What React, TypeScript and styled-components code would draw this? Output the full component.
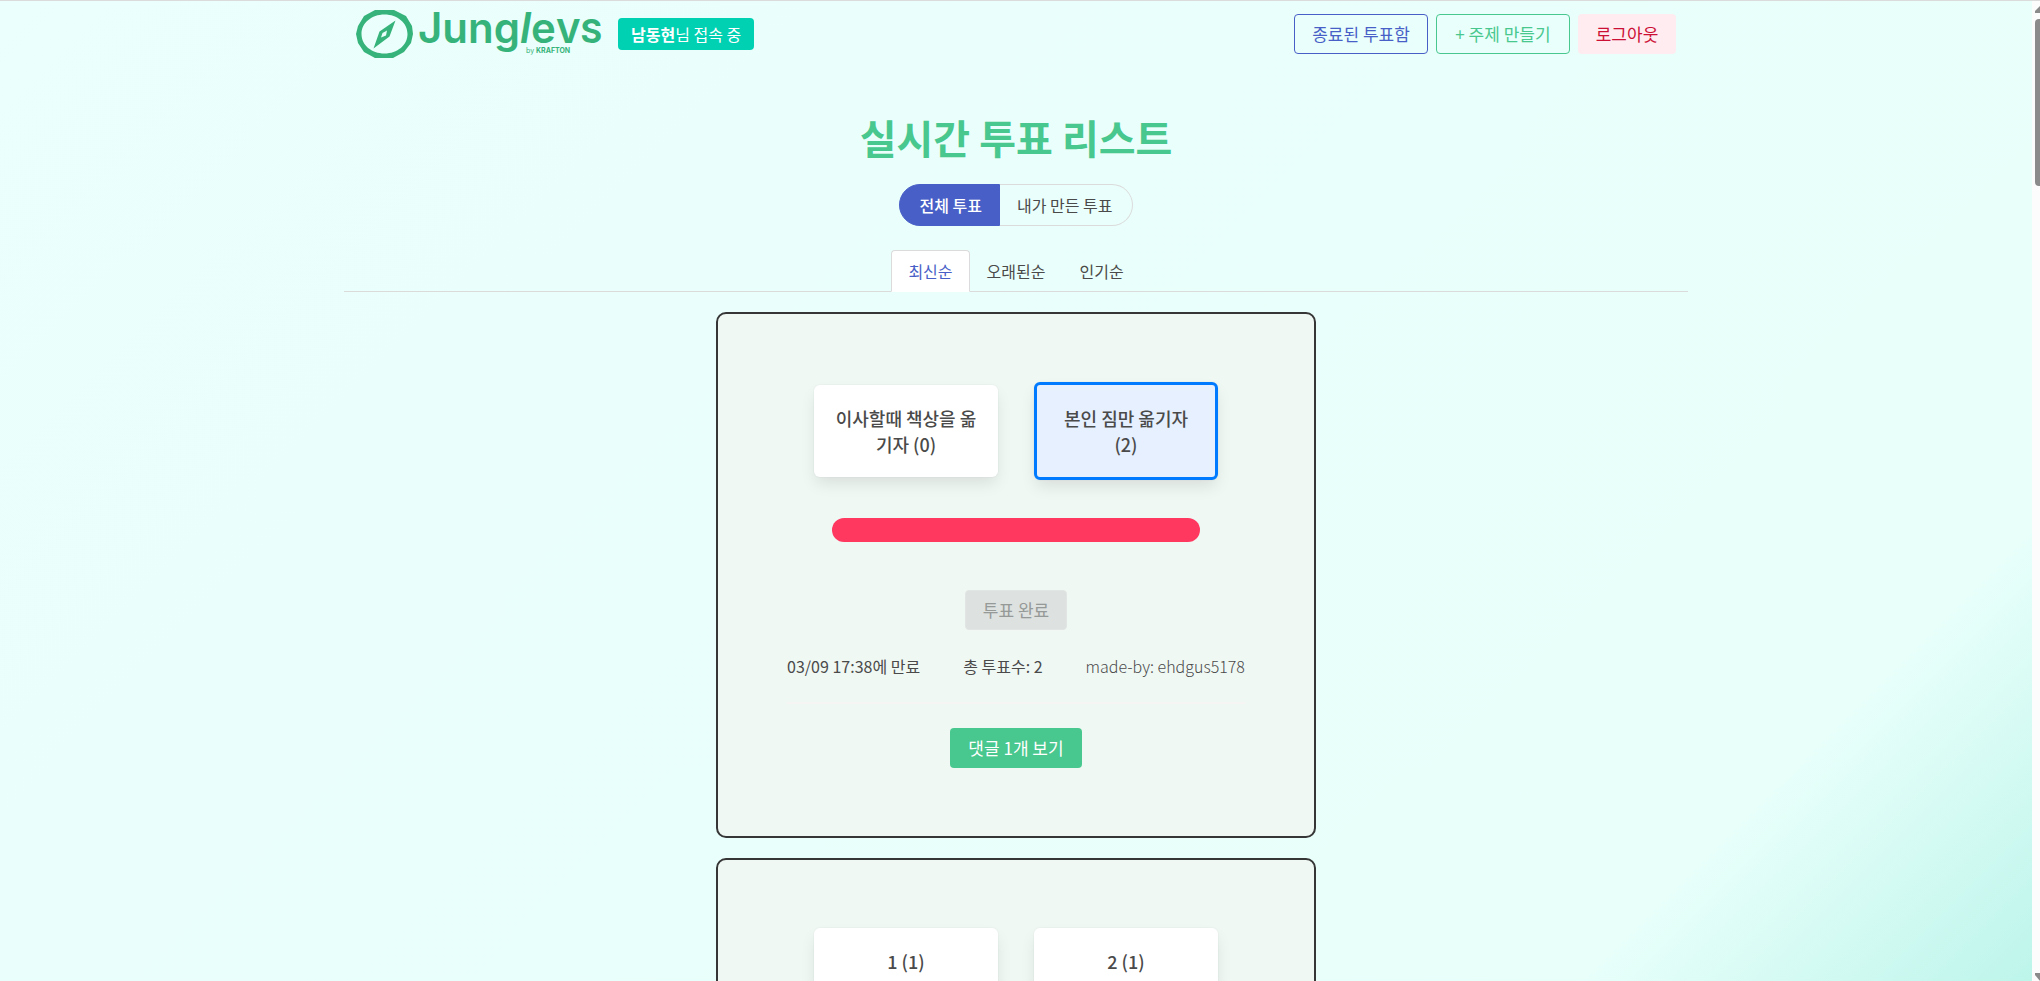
import React from "react";
import styled, { createGlobalStyle } from "styled-components";

const GlobalStyle = createGlobalStyle`
  *, *::before, *::after { box-sizing: border-box; }
  html, body, #root { height: 100%; }
  body {
    margin: 0;
    overflow: hidden;
    color: #4a4a4a;
    font-family: "Noto Sans CJK KR", "Noto Sans KR", sans-serif;
    font-size: 16px;
    line-height: 24px;
  }
  button { font-family: inherit; cursor: pointer; }
  h1, p, ul { margin: 0; padding: 0; }
`;

const Shell = styled.div`
  display: grid;
  grid-template-columns: minmax(0, 1fr) 8px;
  height: 100vh;
  border-top: 1px solid #dbdbdb;
`;

const Page = styled.div`
  overflow: hidden;
  background: linear-gradient(135deg, #ebfffc 0%, #e8fffa 85%, #bdf5eb 100%);
`;

const Container = styled.div`
  max-width: 1344px;
  margin: 0 auto;
`;

const Header = styled.header`
  display: flex;
  align-items: center;
  justify-content: space-between;
  height: 66px;
  padding: 0 12px;
`;

const HeaderGroup = styled.div`
  display: flex;
  align-items: center;
  gap: 8px;
`;

const LogoLink = styled.a`
  display: block;
  height: 66px;
`;

const UserTag = styled.span`
  display: inline-flex;
  align-items: center;
  height: 32px;
  padding: 0 13px;
  border-radius: 4px;
  background: #00d1b2;
  color: #fff;
  white-space: nowrap;
`;

type Tone = "link" | "primary" | "danger" | "success" | "done";

const tones: Record<Tone, { bg: string; fg: string; line: string; minWidth: number }> = {
  link: { bg: "transparent", fg: "#485fc7", line: "#485fc7", minWidth: 134 },
  primary: { bg: "transparent", fg: "#48c78e", line: "#48c78e", minWidth: 134 },
  danger: { bg: "#feecf0", fg: "#cc0f35", line: "transparent", minWidth: 98 },
  success: { bg: "#48c78e", fg: "#fff", line: "transparent", minWidth: 132 },
  done: { bg: "#dde1df", fg: "#959997", line: "#e1e5e3", minWidth: 102 },
};

const Button = styled.button<{ $tone: Tone }>`
  display: inline-flex;
  align-items: center;
  justify-content: center;
  min-width: ${(p) => tones[p.$tone].minWidth}px;
  height: 40px;
  padding: 0 16px;
  border: 1px solid ${(p) => tones[p.$tone].line};
  border-radius: 4px;
  background: ${(p) => tones[p.$tone].bg};
  color: ${(p) => tones[p.$tone].fg};
  font-size: 17px;
  font-weight: 400;
  line-height: 24px;
  white-space: nowrap;
`;

const Title = styled.h1`
  margin-top: 48px;
  color: #48c78e;
  font-size: 40px;
  font-weight: 700;
  line-height: 45px;
  text-align: center;
`;

const Toggle = styled.div`
  display: flex;
  justify-content: center;
  margin-top: 24px;
`;

const ToggleButton = styled.button<{ $active?: boolean }>`
  height: 42px;
  padding: 0 17px;
  border: 1px solid ${(p) => (p.$active ? "#485fc7" : "#dbdbdb")};
  background: ${(p) => (p.$active ? "#485fc7" : "transparent")};
  color: ${(p) => (p.$active ? "#fff" : "#4a4a4a")};
  font-size: 16px;
  font-weight: ${(p) => (p.$active ? 500 : 400)};
  line-height: 24px;
  &:first-child { padding-left: 20px; border-radius: 21px 0 0 21px; }
  &:last-child { padding-right: 20px; border-left: 0; border-radius: 0 21px 21px 0; }
`;

const SortTabs = styled.div`
  display: flex;
  justify-content: center;
  margin: 24px 0 20px;
  box-shadow: inset 0 -1px 0 #dbdbdb;
`;

const SortTab = styled.button<{ $active?: boolean }>`
  height: 42px;
  padding: 0 16px;
  border: 1px solid ${(p) => (p.$active ? "#dbdbdb" : "transparent")};
  border-bottom-color: ${(p) => (p.$active ? "#fff" : "transparent")};
  border-radius: 4px 4px 0 0;
  background: ${(p) => (p.$active ? "#fff" : "transparent")};
  color: ${(p) => (p.$active ? "#485fc7" : "#4a4a4a")};
  font-size: 16px;
  line-height: 24px;
`;

const Feed = styled.main`
  display: flex;
  flex-direction: column;
  align-items: center;
  gap: 20px;
`;

const Card = styled.article`
  display: flex;
  flex-direction: column;
  align-items: center;
  width: 100%;
  max-width: 600px;
  min-height: 526px;
  padding: 68px;
  border: 2px solid #363636;
  border-radius: 10px;
  background: #f0f8f4;
`;

const Options = styled.div`
  display: flex;
  align-items: center;
  justify-content: center;
  gap: 36px;
`;

const Option = styled.button<{ $selected?: boolean }>`
  width: 184px;
  padding: 20px;
  border: ${(p) => (p.$selected ? "3px solid #007bff" : "0")};
  border-radius: 6px;
  background: ${(p) => (p.$selected ? "#e6f0ff" : "#fff")};
  box-shadow: 0 8px 16px -2px rgba(10, 10, 10, 0.1), 0 0 0 1px rgba(10, 10, 10, 0.02);
  color: #4a4a4a;
  font-size: 18px;
  font-weight: 500;
  line-height: 26px;
  text-align: center;
`;

const ResultBar = styled.div`
  width: 368px;
  height: 24px;
  margin: 38px 0 48px;
  border-radius: 12px;
  background: #48c78e;
  overflow: hidden;
`;

const ResultFill = styled.div`
  height: 100%;
  margin-left: auto;
  background: #ff3860;
`;

const Meta = styled.div`
  display: flex;
  gap: 43px;
  margin-top: 24px;
  white-space: nowrap;
`;

const Author = styled.span`
  font-weight: 300;
`;

const Divider = styled.hr`
  width: 100%;
  max-width: 458px;
  height: 2px;
  margin: 24px 0;
  border: 0;
  background: #f7f5f3;
`;

const ScrollTrack = styled.div`
  display: flex;
  flex-direction: column;
  align-items: flex-end;
  padding-top: 5px;
  background: #fcfcfc;
  overflow: hidden;
`;

const ScrollThumb = styled.div`
  width: 5px;
  height: 167px;
  margin: 6px 0 auto;
  border-radius: 4px 0 0 4px;
  background: #8b8b8b;
`;

function Logo() {
  return (
    <svg width="254" height="66" viewBox="356 1 254 66" role="img" aria-label="JungleVS">
      <g fill="#36b37a">
        <path
          fillRule="evenodd"
          d="M375 10H394L406 16L412 26L413 34L411 43L404 52L393 58H375L364 52L358 43L356 34L358 26L364 16ZM384.500 14.500C371.500 14.500 361.500 23 361.500 34S371.500 53.500 384.500 53.500S407.500 45 407.500 34S397.500 14.500 384.500 14.500Z"
        />
        <path
          fillRule="evenodd"
          d="M395.500 20.500L389.500 36.500L373.500 48.500L379.500 31.500ZM387 30.500L382.500 33L381 37.500L386 35.500Z"
        />
        <text x="418" y="43" fontFamily="Inter, sans-serif" fontSize="42" fontWeight="600">
          Jung
          <tspan fontStyle="italic">l</tspan>
          e
          <tspan fontSize="33" fontWeight="700">VS</tspan>
        </text>
        <text x="526" y="53" fontFamily="Inter, sans-serif" fontSize="7">
          by <tspan fontWeight="700">KRAFTON</tspan>
        </text>
      </g>
    </svg>
  );
}

interface PollOption {
  label: string;
  votes: number;
  selected?: boolean;
}

interface Poll {
  options: PollOption[];
  details?: { expires: string; author: string; comments: number };
}

const polls: Poll[] = [
  {
    options: [
      { label: "이사할때 책상을 옮기자", votes: 0 },
      { label: "본인 짐만 옮기자", votes: 2, selected: true },
    ],
    details: { expires: "03/09 17:38", author: "ehdgus5178", comments: 1 },
  },
  {
    options: [
      { label: "1", votes: 1 },
      { label: "2", votes: 1 },
    ],
  },
];

function PollCard({ options, details }: Poll) {
  const total = options.reduce((sum, o) => sum + o.votes, 0);
  return (
    <Card>
      <Options>
        {options.map((o) => (
          <Option key={o.label} type="button" $selected={o.selected}>
            {`${o.label} (${o.votes})`}
          </Option>
        ))}
      </Options>
      {details && (
        <>
          <ResultBar>
            <ResultFill style={{ width: `${(options[1].votes / total) * 100}%` }} />
          </ResultBar>
          <Button type="button" $tone="done" disabled>
            투표 완료
          </Button>
          <Meta>
            <span>{`${details.expires}에 만료`}</span>
            <span>{`총 투표수: ${total}`}</span>
            <Author>{`made-by: ${details.author}`}</Author>
          </Meta>
          <Divider />
          <Button type="button" $tone="success">
            {`댓글 ${details.comments}개 보기`}
          </Button>
        </>
      )}
    </Card>
  );
}

export default function App() {
  return (
    <>
      <GlobalStyle />
      <Shell>
        <Page>
          <Container>
            <Header>
              <HeaderGroup>
                <LogoLink href="#">
                  <Logo />
                </LogoLink>
                <UserTag>
                  <strong>남동현</strong>님 접속 중
                </UserTag>
              </HeaderGroup>
              <HeaderGroup>
                <Button type="button" $tone="link">종료된 투표함</Button>
                <Button type="button" $tone="primary">+ 주제 만들기</Button>
                <Button type="button" $tone="danger">로그아웃</Button>
              </HeaderGroup>
            </Header>
            <Title>실시간 투표 리스트</Title>
            <Toggle>
              <ToggleButton type="button" $active>전체 투표</ToggleButton>
              <ToggleButton type="button">내가 만든 투표</ToggleButton>
            </Toggle>
            <SortTabs>
              <SortTab type="button" $active>최신순</SortTab>
              <SortTab type="button">오래된순</SortTab>
              <SortTab type="button">인기순</SortTab>
            </SortTabs>
            <Feed>
              {polls.map((poll) => (
                <PollCard key={poll.options[0].label} {...poll} />
              ))}
            </Feed>
          </Container>
        </Page>
        <ScrollTrack aria-hidden="true">
          <svg width="5" height="7" viewBox="0 0 5 7">
            <path d="M5 0L0 5V7H5Z" fill="#8b8b8b" />
          </svg>
          <ScrollThumb />
          <svg width="5" height="8" viewBox="0 0 5 8">
            <path d="M0 0H5V8L0 2Z" fill="#8b8b8b" />
          </svg>
        </ScrollTrack>
      </Shell>
    </>
  );
}
